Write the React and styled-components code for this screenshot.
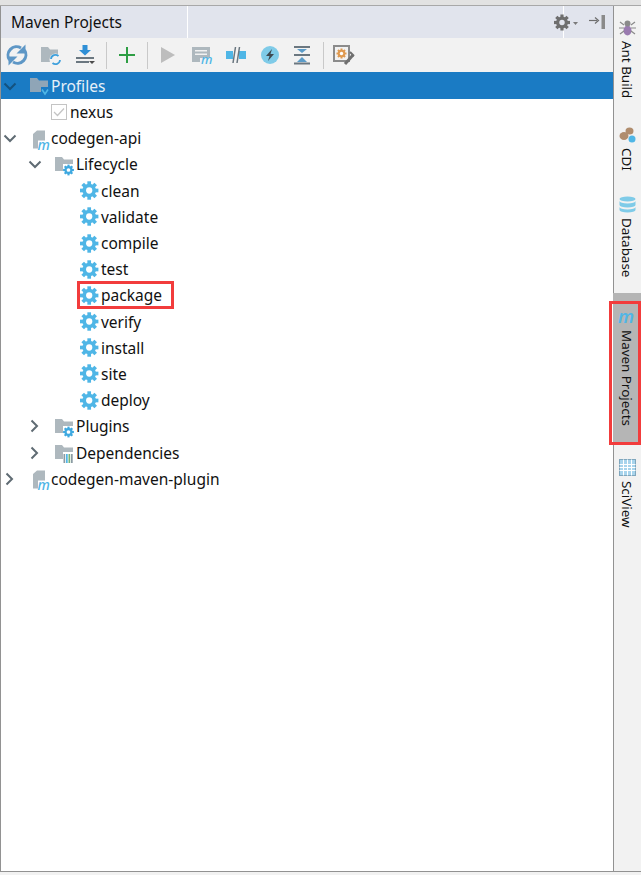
import styled, { createGlobalStyle } from "styled-components";

const GlobalStyle = createGlobalStyle`
  html, body {
    margin: 0;
    padding: 0;
    background: #f2f2f2;
  }
  body {
    font-family: "Noto Sans", "Open Sans", sans-serif;
    color: #111;
  }
`;

const Window = styled.div`
  width: 641px;
  height: 875px;
  overflow: hidden;
  display: flex;
  flex-direction: column;
`;

const TopStrip = styled.div`
  height: 5px;
  background: #e2e2e2;
  border-bottom: 1px solid #a8a8a8;
  flex: none;
`;

const Main = styled.div`
  height: 865px;
  display: flex;
  flex: none;
  border-bottom: 1px solid #929292;
`;

const Panel = styled.div`
  width: 612px;
  display: flex;
  flex-direction: column;
  background: #fff;
  border-left: 1px solid #929292;
  border-right: 1px solid #929292;
`;

const TitleBar = styled.div`
  height: 32px;
  display: flex;
  background: #e1e4ed;
  flex: none;
`;

const TitleCell = styled.div`
  width: 187px;
  padding-left: 10px;
  box-sizing: border-box;
  border-right: 1px solid #fff;
  font-size: 15.5px;
  line-height: 33px;
  color: #111;
  white-space: nowrap;
`;

const TitleSpacer = styled.div`
  width: 375px;
  border-right: 1px solid #fff;
`;

const TitleActions = styled.div`
  flex: 1;
  display: flex;
  align-items: center;
  margin-left: -10px;
  gap: 11px;
`;

const Toolbar = styled.div`
  height: 34px;
  flex: none;
  display: flex;
  align-items: center;
  padding-left: 5px;
  background: #f2f2f2;
`;

const ToolIcon = styled.svg`
  width: 22px;
  height: 22px;
  flex: none;
  overflow: visible;
  margin-right: ${(p) => p.$gap ?? 12}px;
`;

const ToolSep = styled.div`
  width: 1px;
  height: 27px;
  background: #c9c9c9;
  margin: 0 9px 0 -2px;
  flex: none;
`;

const Tree = styled.div`
  display: flex;
  flex-direction: column;
`;

const Row = styled.div`
  height: ${(p) => (p.$selected ? 27 : 26.2)}px;
  flex: none;
  display: flex;
  align-items: center;
  position: relative;
  padding-left: ${(p) => p.$level * 25}px;
  background: ${(p) => (p.$selected ? "#1a7bc4" : "transparent")};
  color: ${(p) => (p.$selected ? "#e6f0f8" : "#111")};
  font-size: 15.5px;
  line-height: 24px;
  white-space: nowrap;
`;

const ArrowBox = styled.div`
  width: 29px;
  flex: none;
  display: flex;
  padding-left: 2px;
  box-sizing: border-box;
`;

const NodeIcon = styled.svg`
  width: 19px;
  height: 19px;
  flex: none;
  overflow: visible;
  margin-right: 2px;
`;

const CheckIcon = styled.svg`
  width: 16px;
  height: 16px;
  flex: none;
  margin: 0 3px 0 -4px;
`;

const Highlight = styled.div`
  position: absolute;
  left: 76px;
  top: -1px;
  width: 97px;
  height: 28px;
  box-sizing: border-box;
  border: 3px solid #f23c3c;
`;

const Sidebar = styled.div`
  width: 27px;
  flex: none;
  display: flex;
  flex-direction: column;
  background: #f2f2f2;
`;

const Tab = styled.div`
  position: relative;
  display: flex;
  flex-direction: column;
  align-items: center;
  gap: ${(p) => p.$gap ?? 5}px;
  padding: ${(p) => p.$top}px 0 ${(p) => p.$bottom}px;
  margin-left: -1px;
  background: ${(p) => (p.$active ? "#b5b5b5" : "transparent")};
`;

const TabLabel = styled.span`
  writing-mode: vertical-rl;
  font-size: 13.4px;
  line-height: 16px;
  color: #111;
  white-space: nowrap;
`;

const TabIcon = styled.svg`
  width: 17px;
  height: 17px;
  flex: none;
  overflow: visible;
`;

const TabMark = styled.div`
  position: absolute;
  left: -4px;
  top: 8px;
  width: 32px;
  height: 144px;
  box-sizing: border-box;
  border: 3px solid #f23c3c;
`;

const BottomStrip = styled.div`
  flex: 1;
  background: #f2f2f2;
`;

const Chevron = ({ open, color = "#5f6b73" }) => (
  <svg width="14" height="14" viewBox="0 0 14 14">
    <path
      d={open ? "M1.5 4.5 L7 10 L12.5 4.5" : "M3.5 1.5 L9 7 L3.5 12.5"}
      fill="none"
      stroke={color}
      strokeWidth="2"
    />
  </svg>
);

const gearTeeth = [0, 45, 90, 135];

const GearShape = ({ cx, cy, r, fill, hole }) => (
  <g>
    {gearTeeth.map((a) => (
      <rect
        key={a}
        x={cx - r * 0.2}
        y={cy - r}
        width={r * 0.4}
        height={r * 2}
        fill={fill}
        transform={`rotate(${a} ${cx} ${cy})`}
      />
    ))}
    <circle cx={cx} cy={cy} r={r * 0.74} fill={fill} />
    <circle cx={cx} cy={cy} r={r * 0.34} fill={hole} />
  </g>
);

const GearNode = () => (
  <NodeIcon viewBox="0 0 19 19">
    <GearShape cx={9.2} cy={9.5} r={9.2} fill="#4fb6e6" hole="#fff" />
  </NodeIcon>
);

const FolderNode = ({ badge }) => (
  <NodeIcon viewBox="0 0 19 19">
    <path
      d="M0 2 H7 L9 4.5 H18 V16 H0 Z"
      fill={badge === "check" ? "#8fa5b7" : "#aeb8be"}
    />
    {badge === "check" && (
      <>
        <rect x="11" y="11" width="8" height="9" fill="#1a7bc4" />
        <path d="M12 13.5 L15 18 L18 13.5" fill="none" stroke="#4fb6e6" strokeWidth="1.6" />
      </>
    )}
    {badge === "gear" && (
      <>
        <rect x="8" y="9" width="11" height="12" fill="#fff" />
        <GearShape cx={13.5} cy={15} r={5.4} fill="#3fa9e0" hole="#fff" />
      </>
    )}
    {badge === "bars" && (
      <>
        <rect x="8" y="9" width="11" height="12" fill="#fff" />
        <rect x="8.5" y="11" width="1.7" height="9" fill="#8a9aa3" />
        <rect x="11" y="11" width="1.7" height="9" fill="#4fb6e6" />
        <rect x="13.5" y="11" width="1.7" height="9" fill="#78b478" />
        <rect x="16" y="11" width="1.7" height="9" fill="#8a9aa3" />
      </>
    )}
  </NodeIcon>
);

const ModuleNode = () => (
  <NodeIcon viewBox="0 0 19 19">
    <path d="M3 5 L7 1.5 H15 V11.5 H8 V19.5 H3 Z" fill="#aeb8be" />
    <text x="7.5" y="20.5" fontSize="14" fontStyle="italic" fontWeight="500" fill="#4fb6e6" fontFamily="Noto Sans, sans-serif">m</text>
  </NodeIcon>
);

const CheckNode = () => (
  <CheckIcon viewBox="0 0 16 16">
    <rect x="0.5" y="0.5" width="15" height="15" fill="#fff" stroke="#c4c4c4" />
    <path d="M3 8 L6.5 11.5 L13 4.5" fill="none" stroke="#c4c4c4" strokeWidth="1.3" />
  </CheckIcon>
);

const rows = [
  { label: "Profiles", level: 0, arrow: "open", icon: "check", selected: true },
  { label: "nexus", level: 1, icon: "checkbox" },
  { label: "codegen-api", level: 0, arrow: "open", icon: "module" },
  { label: "Lifecycle", level: 1, arrow: "open", icon: "gear" },
  { label: "clean", level: 2, icon: "task" },
  { label: "validate", level: 2, icon: "task" },
  { label: "compile", level: 2, icon: "task" },
  { label: "test", level: 2, icon: "task" },
  { label: "package", level: 2, icon: "task", marked: true },
  { label: "verify", level: 2, icon: "task" },
  { label: "install", level: 2, icon: "task" },
  { label: "site", level: 2, icon: "task" },
  { label: "deploy", level: 2, icon: "task" },
  { label: "Plugins", level: 1, arrow: "closed", icon: "gear" },
  { label: "Dependencies", level: 1, arrow: "closed", icon: "bars" },
  { label: "codegen-maven-plugin", level: 0, arrow: "closed", icon: "module" },
];

const renderIcon = (icon) => {
  if (icon === "task") return <GearNode />;
  if (icon === "module") return <ModuleNode />;
  if (icon === "checkbox") return <CheckNode />;
  return <FolderNode badge={icon} />;
};

const ToolbarIcons = () => (
  <Toolbar>
    <ToolIcon viewBox="0 0 22 22">
      <path d="M3.5 16 A8.5 8.5 0 0 1 15 4" fill="none" stroke="#5e97c6" strokeWidth="3" />
      <path d="M18.5 6 A8.5 8.5 0 0 1 7 18" fill="none" stroke="#5e97c6" strokeWidth="3" />
      <path d="M19.5 0.5 V9.5 H10.5 Z" fill="#5e97c6" />
      <path d="M2.5 21.5 V12.5 H11.5 Z" fill="#5e97c6" />
    </ToolIcon>
    <ToolIcon viewBox="0 0 22 22">
      <path d="M1 3 H8 L10 5.5 H18 V18 H1 Z" fill="#aeb8be" />
      <circle cx="15.5" cy="15.5" r="6" fill="#f2f2f2" />
      <path d="M11 15 A4.5 4.5 0 0 1 18.5 12 M20 16 A4.5 4.5 0 0 1 12.5 19" fill="none" stroke="#3fa0dc" strokeWidth="1.8" />
    </ToolIcon>
    <ToolIcon viewBox="0 0 22 22">
      <path d="M8.5 1 H13.5 V6 H17 L11 11.5 L5 6 H8.5 Z" fill="#2f8fd6" />
      <rect x="2" y="13" width="18" height="2" fill="#6b7780" />
      <rect x="2" y="17" width="13" height="2" fill="#6b7780" />
      <path d="M15 17 H21 L18 20 Z" fill="#4b4b4b" />
    </ToolIcon>
    <ToolSep />
    <ToolIcon viewBox="0 0 22 22" $gap={11}>
      <path d="M10 3 H12 V10 H19 V12 H12 V19 H10 V12 H3 V10 H10 Z" fill="#2e9e44" />
    </ToolIcon>
    <ToolSep />
    <ToolIcon viewBox="0 0 22 22">
      <path d="M4 3 L18 11 L4 19 Z" fill="#bdbdbd" />
    </ToolIcon>
    <ToolIcon viewBox="0 0 22 22">
      <path d="M1 3 H19 V14 H9 V18 H1 Z" fill="#aeb8be" />
      <rect x="4" y="6" width="12" height="1.5" fill="#f2f2f2" />
      <rect x="4" y="9.5" width="12" height="1.5" fill="#f2f2f2" />
      <text x="10" y="20" fontSize="13" fontStyle="italic" fontWeight="500" fill="#4fb6e6" fontFamily="Noto Sans, sans-serif">m</text>
    </ToolIcon>
    <ToolIcon viewBox="0 0 22 22">
      <rect x="1" y="7" width="7" height="8" fill="#4fb6e6" />
      <rect x="14" y="7" width="7" height="8" fill="#4fb6e6" />
      <path d="M8 19 L10.5 3 M12 19 L14.5 3" stroke="#69767f" strokeWidth="1.5" />
    </ToolIcon>
    <ToolIcon viewBox="0 0 22 22" $gap={10}>
      <circle cx="11" cy="11" r="9" fill="#7fcbe8" />
      <path d="M13 5 L7 12 H10.5 L9 17 L15 10 H11.5 Z" fill="#3e4a52" />
    </ToolIcon>
    <ToolIcon viewBox="0 0 22 22" $gap={12}>
      <rect x="3" y="2" width="16" height="2" fill="#6b7780" />
      <rect x="3" y="10" width="16" height="2" fill="#6b7780" />
      <path d="M6 5 H16 L11 9 Z" fill="#5b9cc9" />
      <path d="M6 18 H16 L11 13 Z" fill="#5b9cc9" />
      <rect x="3" y="18.5" width="16" height="2" fill="#6b7780" />
    </ToolIcon>
    <ToolSep />
    <ToolIcon viewBox="0 0 22 22">
      <rect x="1" y="2" width="15" height="15" fill="none" stroke="#8b8b8b" strokeWidth="2" />
      <GearShape cx={8.5} cy={9.5} r={5} fill="#e09a50" hole="#fff" />
      <path d="M12 20 L20 11" stroke="#6f6f6f" strokeWidth="3" />
      <path d="M17 8 L21 12" stroke="#6f6f6f" strokeWidth="2" />
    </ToolIcon>
  </Toolbar>
);

const App = () => (
  <Window>
    <GlobalStyle />
    <TopStrip />
    <Main>
      <Panel>
        <TitleBar>
          <TitleCell>Maven Projects</TitleCell>
          <TitleSpacer />
          <TitleActions>
            <svg width="24" height="17" viewBox="0 0 24 17">
              <GearShape cx={8} cy={8.5} r={8} fill="#6e6e6e" hole="#e1e4ed" />
              <path d="M19 8 H24 L21.5 11 Z" fill="#7a7a7a" />
            </svg>
            <svg width="17" height="15" viewBox="0 0 17 15">
              <path d="M0 5.5 H8" stroke="#6e6e6e" strokeWidth="1.2" />
              <path d="M6 2.5 L9.5 5.5 L6 8.5" fill="none" stroke="#6e6e6e" strokeWidth="1.2" />
              <rect x="12.5" y="0" width="3.5" height="14" fill="#8a8a8a" />
            </svg>
          </TitleActions>
        </TitleBar>
        <ToolbarIcons />
        <Tree>
          {rows.map((row) => (
            <Row key={row.label} $level={row.level} $selected={row.selected}>
              <ArrowBox>
                {row.arrow && (
                  <Chevron
                    open={row.arrow === "open"}
                    color={row.selected ? "#14527f" : "#5f6b73"}
                  />
                )}
              </ArrowBox>
              {renderIcon(row.icon)}
              {row.label}
              {row.marked && <Highlight />}
            </Row>
          ))}
        </Tree>
      </Panel>
      <Sidebar>
        <Tab $top={13} $bottom={13}>
          <TabIcon viewBox="0 0 17 17">
            <ellipse cx="8.5" cy="11.5" rx="4" ry="5" fill="#9a7bb0" />
            <circle cx="8.5" cy="4.5" r="3" fill="#8a8a8a" />
            <path d="M1 3 L5 6 M16 3 L12 6 M0 9 H5 M17 9 H12 M1 15 L5 12 M16 15 L12 12" stroke="#8a8a8a" strokeWidth="1.2" />
          </TabIcon>
          <TabLabel>Ant Build</TabLabel>
        </Tab>
        <Tab $top={15} $bottom={13}>
          <TabIcon viewBox="0 0 17 17">
            <ellipse cx="5" cy="10" rx="4.5" ry="4" fill="#b08d6e" />
            <ellipse cx="10.5" cy="5" rx="4" ry="3.5" fill="#b08d6e" />
            <circle cx="13" cy="13" r="3.5" fill="#4fb6e6" />
          </TabIcon>
          <TabLabel>CDI</TabLabel>
        </Tab>
        <Tab $top={12} $bottom={16}>
          <TabIcon viewBox="0 0 17 17">
            <ellipse cx="8.5" cy="3" rx="8" ry="2.6" fill="#7fcbe8" />
            <path d="M0.5 5 A8 2.6 0 0 0 16.5 5 V9 A8 2.6 0 0 1 0.5 9 Z" fill="#7fcbe8" />
            <path d="M0.5 11 A8 2.6 0 0 0 16.5 11 V14 A8 2.6 0 0 1 0.5 14 Z" fill="#7fcbe8" />
          </TabIcon>
          <TabLabel>Database</TabLabel>
        </Tab>
        <Tab $active $top={17} $bottom={18} $gap={3}>
          <TabIcon viewBox="0 0 17 17">
            <text x="-1" y="13" fontSize="18" fontStyle="italic" fontWeight="600" fill="#4fb6e6" fontFamily="Noto Sans, sans-serif">m</text>
          </TabIcon>
          <TabLabel>Maven Projects</TabLabel>
          <TabMark />
        </Tab>
        <Tab $top={15} $bottom={13}>
          <TabIcon viewBox="0 0 17 17">
            <rect x="0.5" y="0.5" width="16" height="16" fill="#a8d4ec" stroke="#7fa6bd" />
            <path d="M0.5 5.5 H16.5 M0.5 8.5 H16.5 M0.5 11.5 H16.5 M4.5 0.5 V16.5 M8.5 0.5 V16.5 M12.5 0.5 V16.5" stroke="#fff" strokeWidth="1" />
          </TabIcon>
          <TabLabel>SciView</TabLabel>
        </Tab>
      </Sidebar>
    </Main>
    <BottomStrip />
  </Window>
);

export default App;
